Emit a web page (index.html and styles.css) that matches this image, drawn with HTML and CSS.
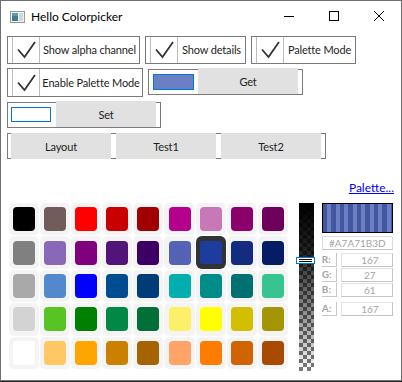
FILE: index.html
```html
<!DOCTYPE html>
<html lang="en">
<head>
    <meta charset="UTF-8">
    <title>Hello Colorpicker</title>
    <link rel="stylesheet" href="styles.css">
</head>
<body>
    <div class="window">
        <div class="titlebar">
            <svg class="app-icon" width="15" height="12" viewBox="0 0 15 12">
                <rect x="0.5" y="0.5" width="14" height="11" fill="#f2f2f2" stroke="#9a9a9a"/>
                <rect x="2" y="2" width="6" height="8" fill="#3f7f8a"/>
                <rect x="2" y="2" width="6" height="3" fill="#5a9bb0"/>
                <rect x="9" y="2" width="4" height="8" fill="#cfd8d8"/>
            </svg>
            <span class="title">Hello Colorpicker</span>
            <div class="caption">
                <div class="caption-btn">
                    <svg width="10" height="10" viewBox="0 0 10 10"><path d="M0 5.5 H10" stroke="#000" stroke-width="1"/></svg>
                </div>
                <div class="caption-btn">
                    <svg width="10" height="10" viewBox="0 0 10 10"><rect x="0.5" y="0.5" width="9" height="9" fill="none" stroke="#000"/></svg>
                </div>
                <div class="caption-btn">
                    <svg width="10" height="10" viewBox="0 0 10 10"><path d="M0 0 L10 10 M10 0 L0 10" stroke="#000" stroke-width="1"/></svg>
                </div>
            </div>
        </div>

        <div class="content">
            <div class="row">
                <div class="option opt-alpha">
                    <div class="check"><svg width="26" height="26" viewBox="0 0 26 26"><path d="M5 12.5 L11.5 20 L22 5" fill="none" stroke="#333" stroke-width="1.8"/></svg></div>
                    <div class="option-label">Show alpha channel</div>
                </div>
                <div class="option opt-details">
                    <div class="check"><svg width="26" height="26" viewBox="0 0 26 26"><path d="M5 12.5 L11.5 20 L22 5" fill="none" stroke="#333" stroke-width="1.8"/></svg></div>
                    <div class="option-label">Show details</div>
                </div>
                <div class="option opt-palette">
                    <div class="check"><svg width="26" height="26" viewBox="0 0 26 26"><path d="M5 12.5 L11.5 20 L22 5" fill="none" stroke="#333" stroke-width="1.8"/></svg></div>
                    <div class="option-label">Palette Mode</div>
                </div>
            </div>

            <div class="row row-2">
                <div class="option opt-enable">
                    <div class="check"><svg width="26" height="26" viewBox="0 0 26 26"><path d="M5 12.5 L11.5 20 L22 5" fill="none" stroke="#333" stroke-width="1.8"/></svg></div>
                    <div class="option-label">Enable Palette Mode</div>
                </div>
                <div class="group group-get">
                    <div class="swatch-box"></div>
                    <button class="btn btn-raised">Get</button>
                </div>
            </div>

            <div class="row row-3">
                <div class="group group-set">
                    <div class="input-box"></div>
                    <button class="btn btn-raised">Set</button>
                </div>
            </div>

            <div class="row row-4">
                <div class="group group-tests">
                    <button class="btn btn-cover">Layout</button>
                    <button class="btn btn-cover">Test1</button>
                    <button class="btn btn-cover">Test2</button>
                </div>
            </div>

            <div class="palette-link"><a href="#">Palette...</a></div>

            <div class="picker">
                <div class="palette" id="palette"></div>
                <div class="alpha-slider">
                    <div class="alpha-handle"><div class="alpha-handle-line"></div></div>
                </div>
                <div class="details">
                    <div class="preview"></div>
                    <div class="hex-box">#A7A71B3D</div>
                    <div class="channel"><span class="channel-name">R:</span><span class="channel-value">167</span></div>
                    <div class="channel"><span class="channel-name">G:</span><span class="channel-value">27</span></div>
                    <div class="channel"><span class="channel-name">B:</span><span class="channel-value">61</span></div>
                    <div class="channel channel-alpha"><span class="channel-name">A:</span><span class="channel-value">167</span></div>
                </div>
            </div>
        </div>
    </div>

    <script>
        const colors = [
            '#000000', '#715b5b', '#ff0000', '#c80000', '#a00000', '#b4008c', '#c878b6', '#8c006e', '#6e005c',
            '#808080', '#8a68b8', '#800080', '#521478', '#3c0064', '#5462b6', '#1c3c9e', '#142c80', '#061c64',
            '#a9a9a9', '#5488cc', '#0000ff', '#004c90', '#003c78', '#02aeae', '#008c88', '#007070', '#38c490',
            '#d3d3d3', '#58c424', '#008000', '#008844', '#007038', '#fcf06a', '#ffff00', '#d2c000', '#a49600',
            '#ffffff', '#ffc864', '#ffa500', '#cc8000', '#a66400', '#ffa466', '#ff7c00', '#d06400', '#a84a00'
        ];
        const selected = 15; // dunkelblau

        const palette = document.getElementById('palette');
        colors.forEach((color, index) => {
            const cell = document.createElement('div');
            cell.className = index === selected ? 'cell selected' : 'cell';
            const swatch = document.createElement('div');
            swatch.className = 'swatch';
            swatch.style.background = color;
            cell.appendChild(swatch);
            palette.appendChild(cell);
        });
    </script>
</body>
</html>
```

FILE: styles.css
```css
* {
    box-sizing: border-box;
}
body {
    margin: 0;
    background-color: #262626;
    font-family: Lato, "Noto Sans", sans-serif;
}
.window {
    width: 402px;
    height: 381px;
    background-color: white;
    border: 1px solid #6f6f6f;
    display: flex;
    flex-direction: column;
}

/* Titelleiste */
.titlebar {
    height: 30px;
    display: flex;
    align-items: center;
    padding-left: 9px;
}
.app-icon {
    margin-top: 1px;
}
.title {
    margin-left: 6px;
    font-size: 12px;
    color: black;
}
.caption {
    margin-left: auto;
    display: flex;
}
.caption-btn {
    width: 45px;
    height: 30px;
    display: flex;
    align-items: center;
    justify-content: center;
}

/* Inhalt */
.content {
    padding: 5px 6px 0 6px;
    flex: 1;
    display: flex;
    flex-direction: column;
}
.row {
    display: flex;
    gap: 5px;
    align-items: flex-start;
}
.row-2 {
    margin-top: 4px;
}
.row-3 {
    margin-top: 5px;
}
.row-4 {
    margin-top: 5px;
}
.option {
    height: 28px;
    border: 1px solid #7a7a7a;
    display: flex;
    padding-left: 4px;
}
.row-2 .option {
    height: 29px;
}
.opt-alpha { width: 133px; }
.opt-details { width: 101px; }
.opt-palette { width: 105px; }
.opt-enable { width: 136px; }
.check {
    width: 28px;
    border-left: 1px solid #bdbdbd;
    border-right: 1px solid #bdbdbd;
    display: flex;
    align-items: center;
    justify-content: center;
}
.option-label {
    flex: 1;
    display: flex;
    align-items: center;
    justify-content: center;
    font-size: 11px;
    letter-spacing: -0.15px;
    color: #1e1e1e;
    white-space: nowrap;
    padding-bottom: 1px;
}

.group {
    height: 26px;
    border: 1px solid #7a7a7a;
    display: flex;
    align-items: flex-start;
}
.btn {
    font-family: inherit;
    font-size: 11px;
    letter-spacing: -0.15px;
    color: #1e1e1e;
    background-color: #e1e1e1;
    border: none;
    padding: 0;
    width: 100px;
    height: 26px;
}
.btn-raised {
    margin-top: -2px;
}
.btn-cover {
    margin-top: -1px;
}
.group-get {
    width: 155px;
    margin-top: 1px;
    padding-left: 4px;
    gap: 4px;
}
.swatch-box {
    width: 41px;
    height: 16px;
    margin-top: 4px;
    border: 1px solid #0078d7;
    background-color: #6b7fc4;
}
.group-set {
    width: 154px;
    padding-left: 3px;
    gap: 5px;
}
.input-box {
    width: 40px;
    height: 15px;
    margin-top: 4px;
    border: 1px solid #0078d7;
    background-color: white;
}
.group-tests {
    width: 319px;
    padding-left: 3px;
    gap: 5px;
}

.palette-link {
    margin-top: 21px;
    text-align: right;
    padding-right: 1px;
    font-size: 12px;
    line-height: 16px;
}
.palette-link a {
    color: #0000ff;
}

/* Farbauswahl */
.picker {
    margin-top: 7px;
    display: flex;
    align-items: flex-start;
    padding-left: 2px;
}
.palette {
    display: grid;
    grid-template-columns: repeat(9, 30.1px);
    grid-template-rows: repeat(5, 32.4px);
    gap: 1px;
}
.cell {
    background-color: #f4f4f4;
    border-radius: 5px;
    display: flex;
    align-items: center;
    justify-content: center;
}
.swatch {
    width: 22px;
    height: 24px;
    border-radius: 4px;
}
.cell.selected {
    background-color: #333333;
    border-radius: 6px;
}
.cell.selected .swatch {
    width: 22px;
    height: 23px;
    border-radius: 2px;
}

.alpha-slider {
    position: relative;
    width: 15px;
    height: 168px;
    margin-left: 11px;
    background:
        linear-gradient(rgba(0, 0, 0, 1), rgba(0, 0, 0, 0.85) 30%, rgba(0, 0, 0, 0.2) 85%, rgba(0, 0, 0, 0)),
        repeating-conic-gradient(#7a7a7a 0 25%, #ffffff 0 50%) 0 0 / 8px 8px;
}
.alpha-handle {
    position: absolute;
    left: -3px;
    top: 54px;
    width: 19px;
    height: 7px;
    border: 1px solid #0078d7;
    background-color: white;
    padding: 1px 2px;
}
.alpha-handle-line {
    height: 3px;
    border-top: 1px solid #111;
    border-bottom: 1px solid #111;
}

.details {
    margin-left: 8px;
    width: 71px;
    display: flex;
    flex-direction: column;
    font-size: 10px;
    color: #a5a5a5;
}
.preview {
    height: 30px;
    border: 1px solid black;
    background: repeating-linear-gradient(90deg, #41579f 0 4.25px, #6c7fc3 4.25px 8.5px);
}
.hex-box {
    margin-top: 3px;
    height: 14px;
    border: 1px solid #dcdcdc;
    border-bottom-color: #c4c4c4;
    text-align: center;
    line-height: 12px;
}
.channel {
    margin-top: 3px;
    height: 14px;
    display: flex;
    gap: 4px;
}
.channel + .channel {
    margin-top: 1px;
}
.channel.channel-alpha {
    margin-top: 5px;
}
.channel-name {
    width: 15px;
    border-right: 1px solid #c8c8c8;
    border-bottom: 1px solid #c8c8c8;
    font-weight: 700;
    line-height: 13px;
}
.channel-value {
    flex: 1;
    border: 1px solid #e2e2e2;
    border-right-color: #c4c4c4;
    border-bottom-color: #c4c4c4;
    text-align: center;
    padding-left: 6px;
    line-height: 12px;
}
```
